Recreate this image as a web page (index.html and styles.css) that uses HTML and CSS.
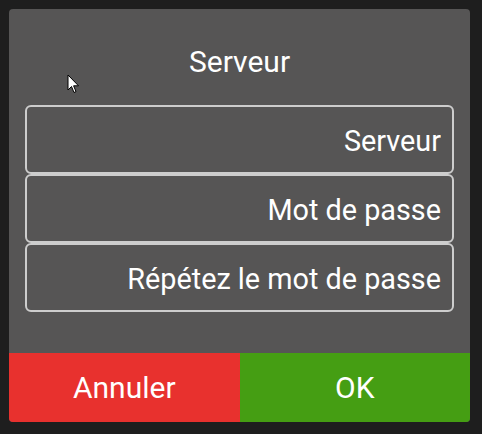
FILE: index.html
```html
<!DOCTYPE html>
<html lang="fr">
<head>
    <meta charset="UTF-8">
    <meta name="viewport" content="width=device-width, initial-scale=1.0">
    <title>Serveur</title>
    <link rel="stylesheet" href="styles.css">
</head>
<body>
    <div class="dialog">
        <!-- Title -->
        <h2 class="dialog-title">Serveur</h2>

        <!-- Fields -->
        <div class="fields">
            <input class="field" type="text" placeholder="Serveur">
            <input class="field" type="password" placeholder="Mot de passe">
            <input class="field" type="password" placeholder="Répétez le mot de passe">
        </div>

        <!-- Action buttons -->
        <div class="actions">
            <button class="btn btn-cancel">Annuler</button>
            <button class="btn btn-ok">OK</button>
        </div>

        <!-- Mouse pointer -->
        <svg class="pointer" width="14" height="21" viewBox="0 0 14 21">
            <path d="M1 1 L1 16 L4.5 12.5 L7 18.5 L9 17.6 L6.6 11.8 L11.5 11.8 Z" fill="#fff" stroke="#000" stroke-width="1"/>
        </svg>
    </div>
</body>
</html>
```

FILE: styles.css
```css
/* Page */
body {
    margin: 0;
    padding: 9px 12px 12px 9px;
    background-color: #1e1e1e;
    font-family: Roboto, "Noto Sans", sans-serif;
}

/* Dialog box */
.dialog {
    position: relative;
    width: 461px;
    height: 413px;
    background-color: #565555;
    border-radius: 4px;
    overflow: hidden;
    display: flex;
    flex-direction: column;
}

.dialog-title {
    margin: 37px 0 28px;
    font-size: 30px;
    font-weight: normal;
    line-height: 31px;
    text-align: center;
    color: #fff;
}

/* Input fields */
.fields {
    display: flex;
    flex-direction: column;
    padding: 0 16px;
}

.field {
    box-sizing: border-box;
    height: 69px;
    margin: 0;
    padding: 3px 11px 0;
    background-color: transparent;
    border: 2px solid #cdcdcd;
    border-radius: 6px;
    font-family: inherit;
    font-size: 28.8px;
    color: #fff;
    text-align: right;
    outline: none;
}

.field::placeholder {
    color: #fff;
    opacity: 1;
}

/* Bottom buttons */
.actions {
    display: flex;
    margin-top: auto;
}

.btn {
    flex: 1;
    height: 69px;
    padding: 0;
    border: none;
    font-family: inherit;
    font-size: 30px;
    color: #fff;
    cursor: pointer;
}

.btn-cancel {
    background-color: #e8312e;
}

.btn-ok {
    background-color: #459e13;
}

/* Cursor drawn over the dialog */
.pointer {
    position: absolute;
    left: 58px;
    top: 65px;
}
```
